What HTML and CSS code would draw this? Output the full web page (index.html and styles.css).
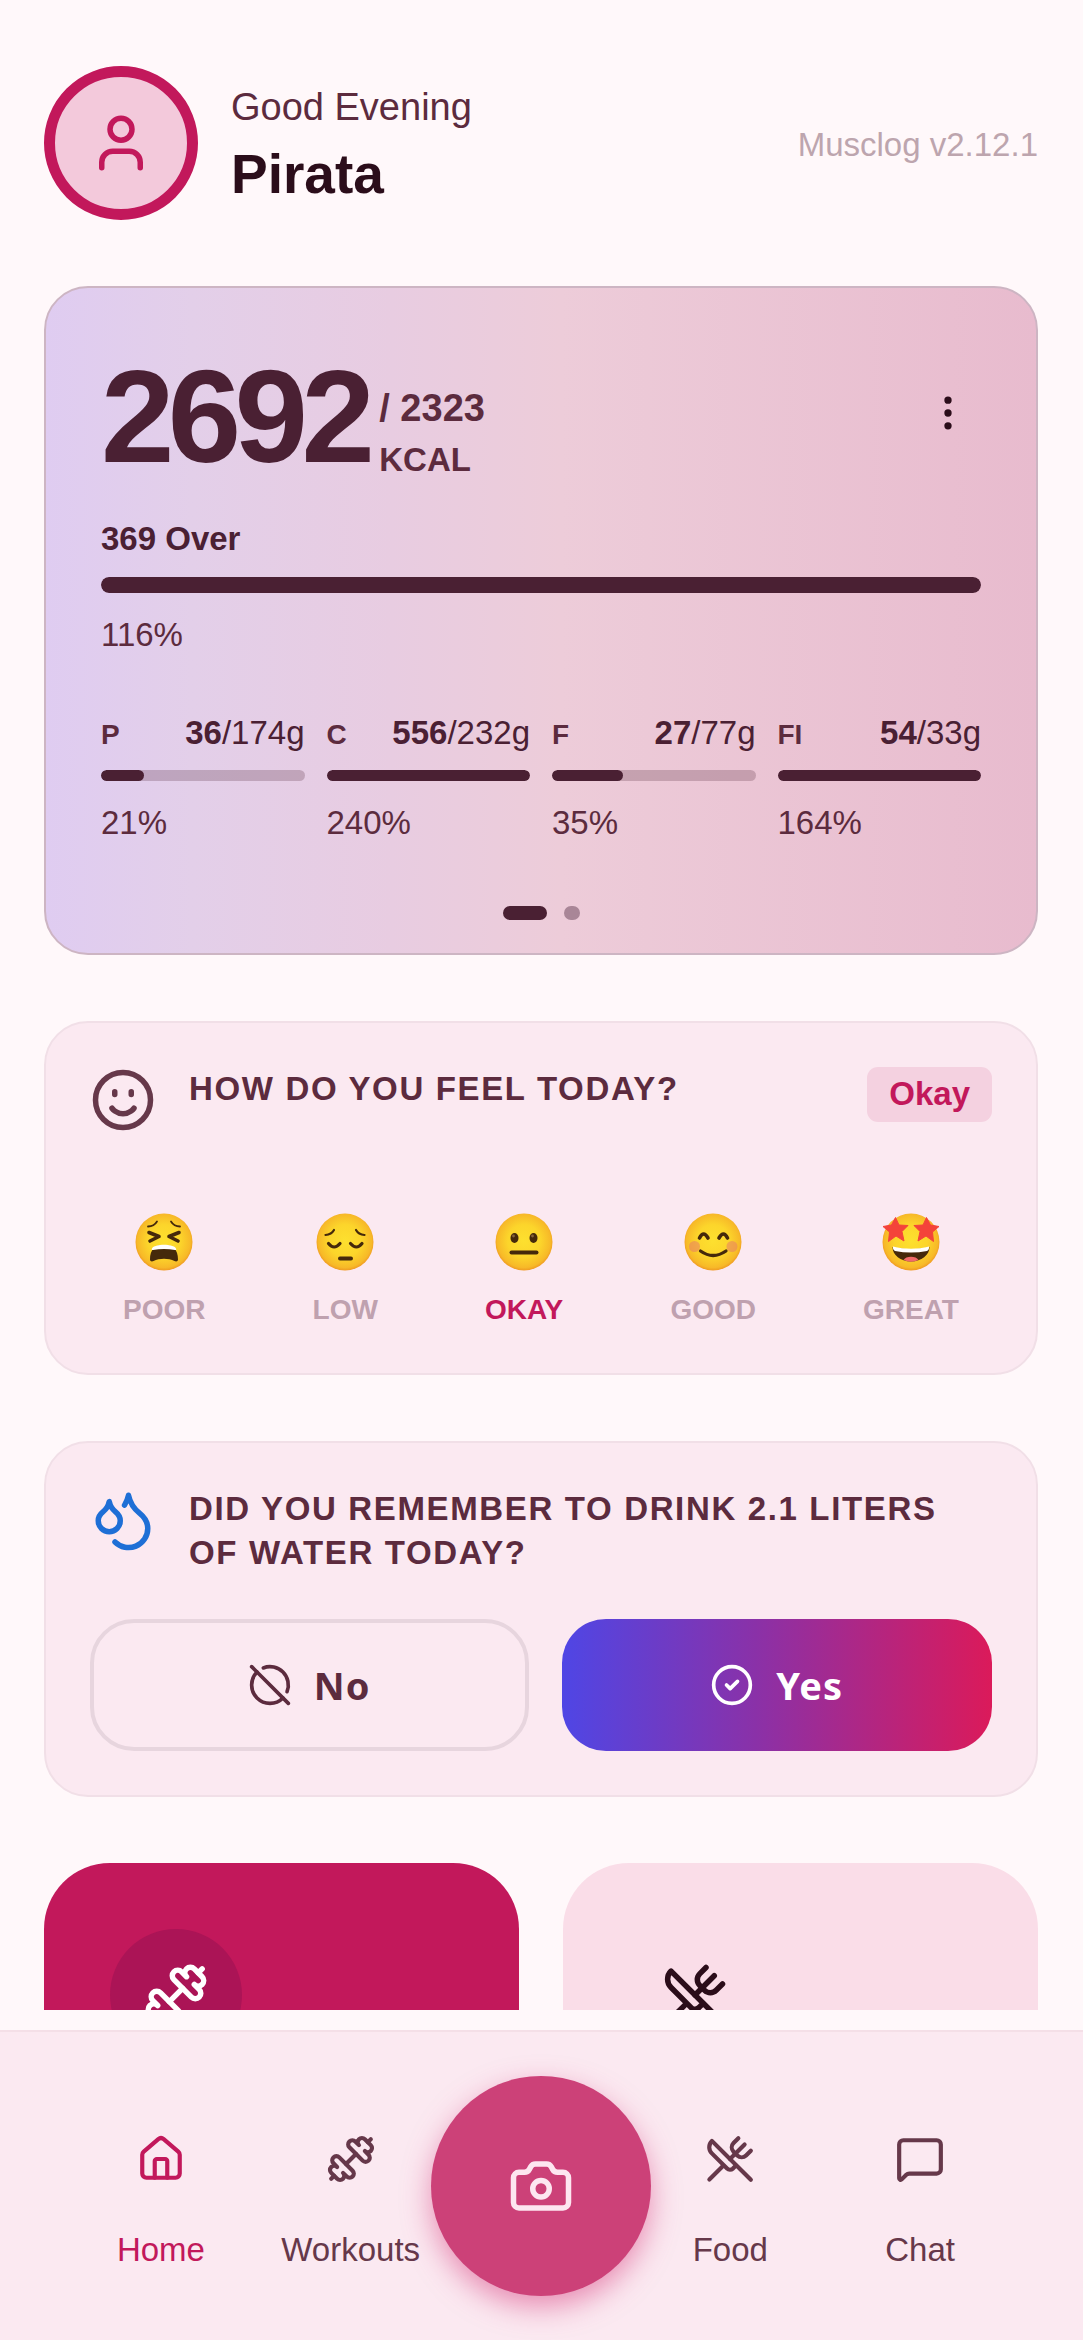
FILE: index.html
```html
<!DOCTYPE html>
<html lang="en">
<head>
<meta charset="utf-8">
<meta name="viewport" content="width=device-width, initial-scale=1">
<title>Musclog</title>
<link rel="stylesheet" href="styles.css">
</head>
<body>
<svg class="defs" aria-hidden="true">
  <defs>
    <radialGradient id="face" cx="50%" cy="48%" r="52%">
      <stop offset="0" stop-color="#fde02f"/>
      <stop offset="0.55" stop-color="#fcd52b"/>
      <stop offset="0.9" stop-color="#f7b928"/>
      <stop offset="1" stop-color="#f09a22"/>
    </radialGradient>
    <symbol id="dumbbell" viewBox="0 0 24 24">
      <path d="M17.596 12.768a2 2 0 1 0 2.829-2.829l-1.768-1.767a2 2 0 0 0 2.828-2.829l-2.828-2.828a2 2 0 0 0-2.829 2.828l-1.767-1.768a2 2 0 1 0-2.829 2.829z"/>
      <path d="m2.5 21.5 1.4-1.4"/><path d="m20.1 3.9 1.4-1.4"/>
      <path d="M5.343 21.485a2 2 0 1 0 2.829-2.828l1.767 1.768a2 2 0 1 0 2.829-2.829l-6.364-6.364a2 2 0 1 0-2.829 2.829l1.768 1.767a2 2 0 0 0-2.828 2.829z"/>
      <path d="m9.6 14.4 4.8-4.8"/>
    </symbol>
    <symbol id="utensils" viewBox="0 0 24 24">
      <path d="m16 2-2.3 2.3a3 3 0 0 0 0 4.2l1.8 1.8a3 3 0 0 0 4.2 0L22 8"/>
      <path d="M15 15 3.3 3.3a4.2 4.2 0 0 0 0 6l7.3 7.3c.7.7 2 .7 2.8 0L15 15Zm0 0 7 7"/>
      <path d="m2.1 21.8 6.4-6.3"/><path d="m19 5-7 7"/>
    </symbol>
  </defs>
</svg>

<main class="screen">
  <header class="greeting">
    <div class="avatar">
      <svg class="icon icon-lg" viewBox="0 0 24 24" aria-hidden="true"><path d="M19 21v-2a4 4 0 0 0-4-4H9a4 4 0 0 0-4 4v2"/><circle cx="12" cy="7" r="4"/></svg>
    </div>
    <div class="greeting-text">
      <p class="greeting-time">Good Evening</p>
      <h1 class="greeting-name">Pirata</h1>
    </div>
    <p class="version">Musclog v2.12.1</p>
  </header>

  <section class="card summary">
    <div class="summary-head">
      <span class="kcal">2692</span>
      <div class="kcal-goal">
        <span class="goal-value">/ 2323</span>
        <span class="goal-unit">KCAL</span>
      </div>
      <button class="menu-button" type="button" aria-label="More options">
        <svg class="icon icon-sm" viewBox="0 0 24 24" aria-hidden="true"><circle cx="12" cy="12" r="1"/><circle cx="12" cy="5" r="1"/><circle cx="12" cy="19" r="1"/></svg>
      </button>
    </div>
    <p class="over">369 Over</p>
    <div class="bar bar-main"><div class="bar-fill" style="width:100%"></div></div>
    <p class="percent">116%</p>
    <div class="macros">
      <div class="macro">
        <div class="macro-head"><span class="macro-name">P</span><span class="macro-value"><b>36</b>/174g</span></div>
        <div class="bar"><div class="bar-fill" style="width:21%"></div></div>
        <p class="percent">21%</p>
      </div>
      <div class="macro">
        <div class="macro-head"><span class="macro-name">C</span><span class="macro-value"><b>556</b>/232g</span></div>
        <div class="bar"><div class="bar-fill" style="width:100%"></div></div>
        <p class="percent">240%</p>
      </div>
      <div class="macro">
        <div class="macro-head"><span class="macro-name">F</span><span class="macro-value"><b>27</b>/77g</span></div>
        <div class="bar"><div class="bar-fill" style="width:35%"></div></div>
        <p class="percent">35%</p>
      </div>
      <div class="macro">
        <div class="macro-head"><span class="macro-name">FI</span><span class="macro-value"><b>54</b>/33g</span></div>
        <div class="bar"><div class="bar-fill" style="width:100%"></div></div>
        <p class="percent">164%</p>
      </div>
    </div>
    <div class="pager"><span class="dot dot-active"></span><span class="dot"></span></div>
  </section>

  <section class="card prompt">
    <div class="prompt-head">
      <svg class="icon icon-lg icon-mood" viewBox="0 0 24 24" aria-hidden="true"><circle cx="12" cy="12" r="10"/><path d="M8 15s1.500 2 4 2 4-2 4-2"/><path d="M9 9v1M15 9v1"/></svg>
      <h2 class="prompt-title">HOW DO YOU FEEL TODAY?</h2>
      <span class="badge">Okay</span>
    </div>
    <div class="moods">
      <button class="mood" type="button">
        <svg class="emoji" viewBox="0 0 58 58" aria-hidden="true">
          <circle cx="29" cy="29" r="28.500" fill="url(#face)"/>
          <g class="ink"><path d="M13 13.500q6 0 9-5M45 13.500q-6 0-9-5" stroke-width="1.800"/><path d="M14 19.500l10 4-9 4.500M44 19.500l-10 4 9 4.500" stroke-width="3.600"/></g>
          <path d="M15 46.500c0-10 5-14.500 14-14.500s14 4.500 14 14.500c0 2-2 2.500-3.500 1.500-6-3-15-3-21 0-1.500 1-3.500.5-3.500-1.500z" fill="#45290b"/>
          <path d="M17 35.500c2.500-5 21.500-5 24 0q1 2-1 1.500-11-2-22 0-2 .5-1-1.500z" fill="#fff"/>
        </svg>
        <span class="mood-label">POOR</span>
      </button>
      <button class="mood" type="button">
        <svg class="emoji" viewBox="0 0 58 58" aria-hidden="true">
          <circle cx="29" cy="29" r="28.500" fill="url(#face)"/>
          <g class="ink"><path d="M9.500 22q6-.5 8.500-5M48.500 22q-6-.5-8.500-5" stroke-width="2.200"/><path d="M12.500 30.500q5.500 7 11.500 0M34.500 30.500q6 7 11.500 0" stroke-width="3.200"/><path d="M24 45.500h11" stroke-width="4"/></g>
        </svg>
        <span class="mood-label">LOW</span>
      </button>
      <button class="mood mood-selected" type="button" aria-pressed="true">
        <svg class="emoji" viewBox="0 0 58 58" aria-hidden="true">
          <circle cx="29" cy="29" r="28.500" fill="url(#face)"/>
          <ellipse cx="19.500" cy="25" rx="4" ry="5" fill="#45290b"/><ellipse cx="38.500" cy="25" rx="4" ry="5" fill="#45290b"/>
          <circle cx="18.500" cy="23" r="1.400" fill="#84633c"/><circle cx="37.500" cy="23" r="1.400" fill="#84633c"/>
          <g class="ink"><path d="M16.500 39.500h25" stroke-width="4"/></g>
        </svg>
        <span class="mood-label">OKAY</span>
      </button>
      <button class="mood" type="button">
        <svg class="emoji" viewBox="0 0 58 58" aria-hidden="true">
          <circle cx="29" cy="29" r="28.500" fill="url(#face)"/>
          <circle cx="10.500" cy="33.500" r="5.500" fill="#ea8560" opacity="0.600"/><circle cx="48" cy="33.500" r="5.500" fill="#ea8560" opacity="0.600"/>
          <g class="ink"><path d="M15.500 25q4-8 8.500 0M35 25q4.500-8 8.500 0" stroke-width="3.600"/><path d="M16.500 38q12.500 9 25.500 0" stroke-width="3.200"/></g>
        </svg>
        <span class="mood-label">GOOD</span>
      </button>
      <button class="mood" type="button">
        <svg class="emoji" viewBox="0 0 58 58" aria-hidden="true">
          <circle cx="29" cy="29" r="28.500" fill="url(#face)"/>
          <path d="M10.500 34c12 3 25 3 37 0 0 8-8 14.500-18.500 14.500s-18.500-6.500-18.500-14.500z" fill="#45290b"/>
          <path d="M11 33.500c12 3 24 3 36 0q.5 3-2 4.500-16 3-32 0-2.500-1.500-2-4.500z" fill="#fff"/>
          <path d="M21.500 47c2-4.500 13-4.500 15 0q-7.500 3.500-15 0z" fill="#f06a6a"/>
          <path d="M13.500 4.500l3.500 7.500 9 .5-6 6 2 9.500-8-5-7.500 5.500 1-9.500-6.500-5.500 8.500-1.500z" fill="#f4433a" stroke="#f4433a" stroke-width="1" stroke-linejoin="round"/>
          <path d="M44.500 4.500l-3.500 7.500-9 .5 6 6-2 9.500 8-5 7.500 5.500-1-9.500 6.500-5.500-8.500-1.500z" fill="#f4433a" stroke="#f4433a" stroke-width="1" stroke-linejoin="round"/>
        </svg>
        <span class="mood-label">GREAT</span>
      </button>
    </div>
  </section>

  <section class="card prompt">
    <div class="prompt-head">
      <svg class="icon icon-lg icon-water" viewBox="0 0 24 24" aria-hidden="true"><path d="M7 16.300c2.200 0 4-1.830 4-4.050 0-1.160-.57-2.260-1.710-3.190S7.290 6.750 7 5.300c-.29 1.450-1.140 2.840-2.290 3.760S3 11.100 3 12.250c0 2.220 1.800 4.050 4 4.050z"/><path d="M12.560 6.600A10.970 10.970 0 0 0 14 3.020c.5 2.500 2 4.900 4 6.500s3 3.500 3 5.500a6.980 6.980 0 0 1-11.910 4.970"/></svg>
      <h2 class="prompt-title">DID YOU REMEMBER TO DRINK 2.1 LITERS OF WATER TODAY?</h2>
    </div>
    <div class="answers">
      <button class="answer answer-no" type="button">
        <svg class="icon icon-sm" viewBox="0 0 24 24" aria-hidden="true"><path d="m2 2 20 20"/><path d="M8.350 2.690A10 10 0 0 1 21.300 15.650"/><path d="M19.080 19.080A10 10 0 1 1 4.920 4.920"/></svg>
        No
      </button>
      <button class="answer answer-yes" type="button">
        <svg class="icon icon-sm" viewBox="0 0 24 24" aria-hidden="true"><circle cx="12" cy="12" r="10"/><path d="m9 12 2 2 4-4"/></svg>
        Yes
      </button>
    </div>
  </section>

  <div class="tiles">
    <button class="tile tile-primary" type="button" aria-label="Workouts"><span class="tile-icon"><svg class="icon icon-lg" aria-hidden="true"><use href="#dumbbell"/></svg></span></button>
    <button class="tile" type="button" aria-label="Food"><span class="tile-icon"><svg class="icon icon-lg" aria-hidden="true"><use href="#utensils"/></svg></span></button>
  </div>
</main>

<nav class="tabs">
  <a class="tab tab-active" href="#home">
    <svg class="icon icon-md" viewBox="0 0 24 24" aria-hidden="true"><path d="M15 21v-8a1 1 0 0 0-1-1h-4a1 1 0 0 0-1 1v8"/><path d="M3 10a2 2 0 0 1 .709-1.528l7-6a2 2 0 0 1 2.582 0l7 6A2 2 0 0 1 21 10v9a2 2 0 0 1-2 2H5a2 2 0 0 1-2-2z"/></svg>
    Home
  </a>
  <a class="tab" href="#workouts">
    <svg class="icon icon-md" aria-hidden="true"><use href="#dumbbell"/></svg>
    Workouts
  </a>
  <button class="camera" type="button" aria-label="Camera">
    <svg class="icon icon-lg" viewBox="0 0 24 24" aria-hidden="true"><path d="M13.997 4a2 2 0 0 1 1.760 1.050l.486.9A2 2 0 0 0 18.003 7H20a2 2 0 0 1 2 2v9a2 2 0 0 1-2 2H4a2 2 0 0 1-2-2V9a2 2 0 0 1 2-2h1.997a2 2 0 0 0 1.759-1.048l.489-.904A2 2 0 0 1 10.004 4z"/><circle cx="12" cy="13" r="3"/></svg>
  </button>
  <a class="tab" href="#food">
    <svg class="icon icon-md" aria-hidden="true"><use href="#utensils"/></svg>
    Food
  </a>
  <a class="tab" href="#chat">
    <svg class="icon icon-md" viewBox="0 0 24 24" aria-hidden="true"><path d="M22 17a2 2 0 0 1-2 2H6.828a2 2 0 0 0-1.414.586l-2.202 2.202A.71.71 0 0 1 2 21.286V5a2 2 0 0 1 2-2h16a2 2 0 0 1 2 2z"/></svg>
    Chat
  </a>
</nav>
</body>
</html>
```

FILE: styles.css
```css
:root {
  --bg: #fff8fa;
  --card: #fbe9f1;
  --primary: #c2185b;
  --text: #2b0d1a;
  --text-strong: #4a2033;
  --text-soft: #5c2b3e;
}

* { box-sizing: border-box; }

body {
  margin: 0;
  height: 100vh;
  display: flex;
  flex-direction: column;
  background: var(--bg);
  color: var(--text-soft);
  font-family: "Liberation Sans", Arial, sans-serif;
  font-size: 33px;
  line-height: 44px;
}

h1, h2, p { margin: 0; }

button {
  margin: 0;
  padding: 0;
  border: 0;
  background: none;
  color: inherit;
  font: inherit;
}

.defs {
  position: absolute;
  width: 0;
  height: 0;
}

.icon {
  display: block;
  flex: none;
  fill: none;
  stroke: currentColor;
  stroke-width: 2;
  stroke-linecap: round;
  stroke-linejoin: round;
}

.icon-sm { width: 44px; height: 44px; }
.icon-md { width: 50px; height: 50px; }
.icon-lg { width: 66px; height: 66px; }
.icon-mood { color: #66384a; }
.icon-water { color: #1e6fd6; }

.screen {
  flex: 1;
  min-height: 0;
  overflow: hidden;
  display: flex;
  flex-direction: column;
  gap: 66px;
  margin-bottom: 20px;
  padding: 66px 45px 0 44px;
}

.screen > * { flex: none; }

/* Greeting */
.greeting {
  display: flex;
  align-items: center;
  gap: 33px;
}

.avatar {
  display: grid;
  place-items: center;
  width: 154px;
  height: 154px;
  border: 11px solid var(--primary);
  border-radius: 50%;
  background: #f3c9db;
  color: var(--primary);
}

.greeting-text {
  flex: 1;
  display: grid;
  gap: 6px;
}

.greeting-time {
  font-size: 38px;
  line-height: 56px;
}

.greeting-name {
  color: var(--text);
  font-size: 55px;
  line-height: 66px;
}

.version {
  padding-top: 4px;
  color: #bda5ae;
}

/* Cards */
.card {
  border: 2px solid #f1dfe7;
  border-radius: 44px;
  background: var(--card);
}

.summary {
  padding: 55px 55px 33px;
  border-color: #cdb5c3;
  background: linear-gradient(90deg, #dfccf1 0%, #e3cfe9 15%, #e8cce1 35%, #edccd9 52%, #e8bbce 100%) border-box;
}

.summary-head {
  display: flex;
  align-items: flex-end;
  gap: 11px;
  margin-bottom: 26px;
}

.kcal {
  color: var(--text-strong);
  font-size: 132px;
  font-weight: 700;
  line-height: 148px;
  letter-spacing: -0.05em;
}

.kcal-goal {
  flex: 1;
  display: grid;
  padding-bottom: 6px;
  font-weight: 700;
}

.goal-value { font-size: 38px; line-height: 54px; }
.goal-unit { line-height: 50px; }

.menu-button {
  align-self: flex-start;
  margin-top: 37px;
  padding: 11px;
  color: var(--text);
}

.over {
  margin-bottom: 16px;
  color: var(--text-strong);
  font-weight: 700;
}

.bar {
  height: 11px;
  margin-bottom: 20px;
  border-radius: 8px;
  background: rgba(74, 32, 51, 0.24);
  overflow: hidden;
}

.bar-main { height: 16px; }

.bar-fill {
  height: 100%;
  border-radius: inherit;
  background: var(--text-strong);
}

.macros {
  display: grid;
  grid-template-columns: repeat(4, 1fr);
  gap: 22px;
  margin: 54px 0 61px;
}

.macro-head {
  display: flex;
  justify-content: space-between;
  align-items: baseline;
  margin-bottom: 15px;
}

.macro-name {
  font-size: 28px;
  font-weight: 700;
  line-height: 38px;
}

.macro-value { color: var(--text-strong); }

.pager {
  display: flex;
  justify-content: center;
  gap: 17px;
}

.dot {
  width: 16px;
  height: 14px;
  border-radius: 8px;
  background: #a98697;
}

.dot-active {
  width: 44px;
  background: var(--text-strong);
}

/* Daily questions */
.prompt { padding: 44px; }

.prompt-head {
  display: flex;
  align-items: flex-start;
  gap: 33px;
}

.prompt-title {
  flex: 1;
  font-size: inherit;
  letter-spacing: 0.05em;
}

.badge {
  padding: 5px 22px 6px;
  border-radius: 11px;
  background: #f4d1e0;
  color: var(--primary);
  font-weight: 700;
}

.moods {
  display: flex;
  justify-content: space-between;
  margin-top: 80px;
  padding: 0 33px;
}

.mood {
  display: grid;
  justify-items: center;
  gap: 20px;
  color: #bfa1af;
}

.mood-selected { color: var(--primary); }

.mood-label {
  font-size: 28px;
  font-weight: 700;
  line-height: 38px;
}

.emoji {
  display: block;
  width: 58px;
  height: 58px;
}

.ink {
  fill: none;
  stroke: #45290b;
  stroke-linecap: round;
  stroke-linejoin: round;
}

.answers {
  display: flex;
  gap: 33px;
  margin-top: 44px;
}

.answer {
  box-sizing: content-box;
  flex: 1 1 0;
  display: flex;
  align-items: center;
  justify-content: center;
  gap: 22px;
  min-height: 132px;
  border-radius: 44px;
  font-family: "Noto Sans", sans-serif;
  font-size: 38px;
  font-weight: 700;
  letter-spacing: 0.03em;
}

.answer-no {
  min-height: 124px;
  border: 4px solid #e7d5de;
}

.answer-yes {
  background: linear-gradient(90deg, #4f46e5, #8a31a8 45%, #db1a5a);
  color: #fff;
}

/* Shortcut tiles */
.tiles {
  display: grid;
  grid-template-columns: 1fr 1fr;
  gap: 44px;
}

.tile {
  display: flex;
  padding: 66px;
  border-radius: 66px;
  background: #fadde8;
  color: var(--text);
}

.tile-icon {
  display: grid;
  place-items: center;
  width: 132px;
  height: 132px;
  border-radius: 50%;
}

.tile-primary {
  background: var(--primary);
  color: #fff;
}

.tile-primary .tile-icon { background: #ab1456; }

/* Bottom navigation */
.tabs {
  flex: none;
  display: grid;
  grid-template-columns: repeat(5, minmax(0, 1fr));
  justify-items: center;
  padding: 44px 68px 44px 66px;
  border-top: 2px solid #f4dfe7;
  background: var(--card);
}

.tab {
  display: flex;
  flex-direction: column;
  align-items: center;
  gap: 44px;
  padding-top: 58px;
  color: #66384a;
  text-decoration: none;
}

.tab-active { color: var(--primary); }

.camera {
  display: grid;
  place-items: center;
  width: 220px;
  height: 220px;
  margin: 0 -15px;
  border-radius: 50%;
  background: #cc4178;
  color: #fde6f0;
  box-shadow: 0 11px 28px rgba(214, 52, 120, 0.5);
}
```
